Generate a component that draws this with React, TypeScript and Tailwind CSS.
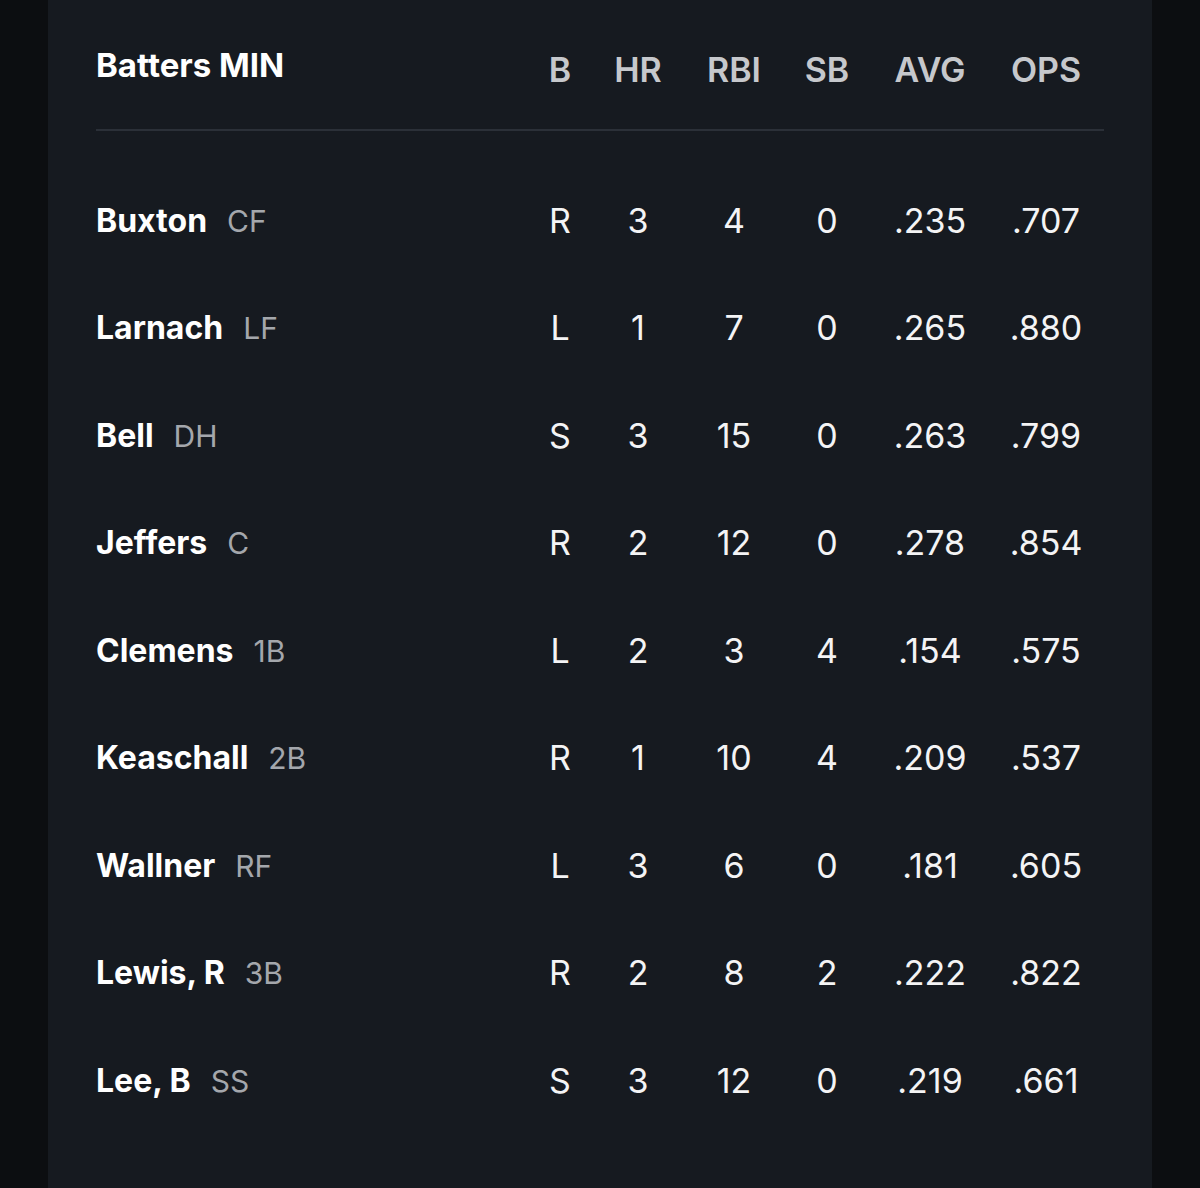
import React from "react";

const rows = [
  { name: "Buxton", pos: "CF", b: "R", hr: "3", rbi: "4", sb: "0", avg: ".235", ops: ".707" },
  { name: "Larnach", pos: "LF", b: "L", hr: "1", rbi: "7", sb: "0", avg: ".265", ops: ".880" },
  { name: "Bell", pos: "DH", b: "S", hr: "3", rbi: "15", sb: "0", avg: ".263", ops: ".799" },
  { name: "Jeffers", pos: "C", b: "R", hr: "2", rbi: "12", sb: "0", avg: ".278", ops: ".854" },
  { name: "Clemens", pos: "1B", b: "L", hr: "2", rbi: "3", sb: "4", avg: ".154", ops: ".575" },
  { name: "Keaschall", pos: "2B", b: "R", hr: "1", rbi: "10", sb: "4", avg: ".209", ops: ".537" },
  { name: "Wallner", pos: "RF", b: "L", hr: "3", rbi: "6", sb: "0", avg: ".181", ops: ".605" },
  { name: "Lewis, R", pos: "3B", b: "R", hr: "2", rbi: "8", sb: "2", avg: ".222", ops: ".822" },
  { name: "Lee, B", pos: "SS", b: "S", hr: "3", rbi: "12", sb: "0", avg: ".219", ops: ".661" },
];

// column widths, in the same order as the headers
const cols = ["w-[60px]", "w-[96px]", "w-[96px]", "w-[90px]", "w-[116px]", "w-[116px]"];
const heads = ["B", "HR", "RBI", "SB", "AVG", "OPS"];

export default function App() {
  return (
    <main className="min-h-[1188px] w-full bg-[#0c0e11] font-['Inter',sans-serif]">
      <div className="mx-12 min-h-[1188px] bg-[#161a20] px-12 pt-[45px]">
        {/* header */}
        <div className="flex items-start">
          <div className="flex-1 text-[33px] leading-10 font-bold text-white">
            Batters MIN
          </div>
          {heads.map((h, i) => (
            <div
              key={h}
              className={`${cols[i]} pt-[5px] text-center text-[34px] leading-10 font-semibold text-[#c6c8cc]`}
            >
              {h}
            </div>
          ))}
        </div>
        <div className="mt-[39px] h-[2px] bg-[#2b3038]" />

        {/* rows */}
        <div className="mt-[36px]">
          {rows.map((r) => (
            <div key={r.name} className="flex h-[107.5px] items-center text-[32px] leading-10">
              <div className="flex flex-1 items-baseline gap-5">
                <span className="font-bold text-white">{r.name}</span>
                <span className="text-[30px] text-[#a4a7ac]">{r.pos}</span>
              </div>
              {[r.b, r.hr, r.rbi, r.sb, r.avg, r.ops].map((v, i) => (
                <div key={i} className={`${cols[i]} text-center text-[34px] text-[#f4f4f5]`}>
                  {v}
                </div>
              ))}
            </div>
          ))}
        </div>
      </div>
    </main>
  );
}
